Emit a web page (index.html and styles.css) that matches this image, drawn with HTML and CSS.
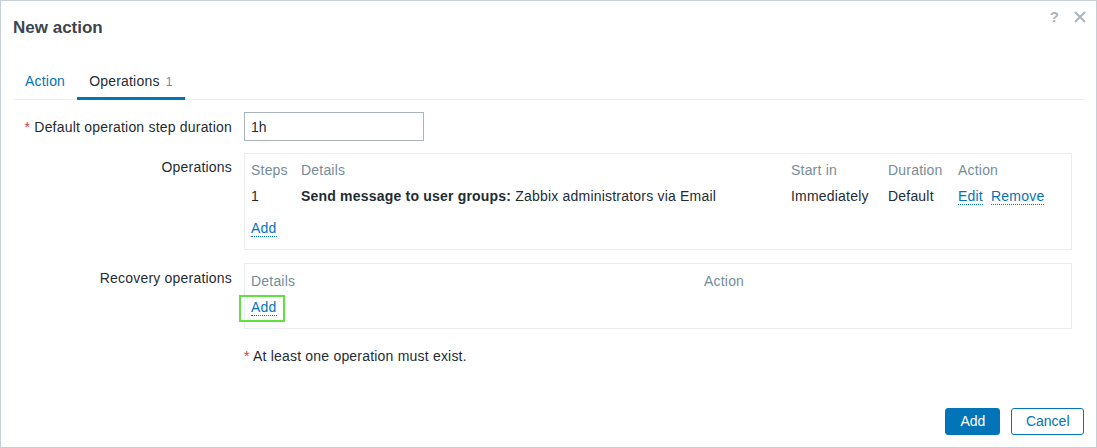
FILE: index.html
```html
<!DOCTYPE html>
<html lang="en">
<head>
<meta charset="utf-8">
<title>New action</title>
<link rel="stylesheet" href="styles.css">
</head>
<body>
<div class="modal">
  <div class="modal-head">
    <h4 class="title">New action</h4>
    <div class="head-controls">
      <span class="help">?</span>
      <svg class="close" width="12" height="12" viewBox="0 0 12 12" aria-hidden="true">
        <path d="M1 1 L11 11 M11 1 L1 11" stroke="#aab5bc" stroke-width="2" fill="none"/>
      </svg>
    </div>
  </div>

  <div class="modal-body">
    <ul class="tabs">
      <li class="tab"><a class="tab-link">Action</a></li>
      <li class="tab active"><a class="tab-link">Operations <span class="count">1</span></a></li>
    </ul>

    <div class="form">
      <div class="form-label"><span class="req">*</span> Default operation step duration</div>
      <div class="form-field"><input class="text-input" type="text" value="1h"></div>

      <div class="form-label label-box">Operations</div>
      <div class="form-field">
        <div class="op-box">
          <table class="op-table ops">
            <colgroup>
              <col class="c-steps"><col class="c-details"><col class="c-start"><col class="c-duration"><col class="c-action">
            </colgroup>
            <thead>
              <tr><th>Steps</th><th>Details</th><th>Start in</th><th>Duration</th><th>Action</th></tr>
            </thead>
            <tbody>
              <tr class="data-row">
                <td>1</td>
                <td><b>Send message to user groups:</b> Zabbix administrators via Email</td>
                <td>Immediately</td>
                <td>Default</td>
                <td><a class="link">Edit</a> <a class="link link-gap">Remove</a></td>
              </tr>
              <tr class="add-row">
                <td colspan="5"><a class="link">Add</a></td>
              </tr>
            </tbody>
          </table>
        </div>
      </div>

      <div class="form-label row-rec">Recovery operations</div>
      <div class="form-field row-rec">
        <div class="op-box">
          <table class="op-table rec">
            <colgroup>
              <col class="c-rdetails"><col class="c-raction">
            </colgroup>
            <thead>
              <tr><th>Details</th><th>Action</th></tr>
            </thead>
            <tbody>
              <tr class="add-row add-row-rec">
                <td colspan="2"><a class="link highlighted">Add</a></td>
              </tr>
            </tbody>
          </table>
        </div>
      </div>

      <div class="form-field note-field"><span class="req">*</span> At least one operation must exist.</div>
    </div>
  </div>

  <div class="modal-foot">
    <button class="btn btn-primary" type="button">Add</button>
    <button class="btn btn-alt" type="button">Cancel</button>
  </div>
</div>
</body>
</html>
```

FILE: styles.css
```css
html, body {
  margin: 0;
  padding: 0;
  background: #ffffff;
}

body {
  font-family: "Liberation Sans", Arial, sans-serif;
  font-size: 14px;
  line-height: 18px;
  color: #1f2c33;
}

.modal {
  box-sizing: border-box;
  width: 1097px;
  height: 448px;
  border: 1px solid #c6cfd5;
  background: #ffffff;
  display: flex;
  flex-direction: column;
}

/* header */
.modal-head {
  display: flex;
  justify-content: space-between;
  align-items: flex-start;
  padding: 8px 10px 0 12px;
}

.title {
  margin: 9px 0 0;
  font-size: 17px;
  line-height: 20px;
  font-weight: bold;
  color: #3b4651;
}

.head-controls {
  display: flex;
  align-items: center;
  gap: 15px;
  height: 16px;
}

.help {
  font-size: 15px;
  line-height: 16px;
  font-weight: bold;
  color: #aab5bc;
}

.close {
  display: block;
}

/* body */
.modal-body {
  flex: 1;
}

.tabs {
  list-style: none;
  margin: 25px 12px 0;
  padding: 0;
  display: flex;
  border-bottom: 1px solid #ebeef0;
  letter-spacing: 0.2px;
}

.tab {
  position: relative;
}

.tab-link {
  display: block;
  padding: 9px 12px 8px;
  line-height: 18px;
  color: #0275b8;
  cursor: pointer;
}

.tab.active .tab-link {
  color: #1f2c33;
}

.tab.active::after {
  content: "";
  position: absolute;
  left: 0;
  right: 0;
  bottom: -1px;
  height: 3px;
  background: #0275b8;
}

.count {
  font-size: 12px;
  color: #768d99;
  margin-left: 2px;
}

/* form */
.form {
  display: grid;
  grid-template-columns: 231px 828px;
  column-gap: 12px;
  row-gap: 12px;
  padding-top: 12px;
  letter-spacing: 0.2px;
}

.form-label {
  text-align: right;
  padding-top: 6px;
  line-height: 18px;
}

.label-box {
  padding-top: 5px;
}

.row-rec {
  margin-top: 1px;
}

.req {
  color: #e33734;
}

.text-input {
  box-sizing: border-box;
  display: block;
  width: 180px;
  height: 29px;
  margin: 0;
  padding: 0 6px;
  border: 1px solid #aab5bb;
  border-radius: 0;
  font-family: "Liberation Sans", Arial, sans-serif;
  font-size: 14px;
  color: #1f2c33;
  background: #ffffff;
  outline: none;
}

.op-box {
  border: 1px solid #ebeef0;
  padding: 0 6px;
}

.op-table {
  width: 100%;
  table-layout: fixed;
  border-collapse: collapse;
}

.c-steps { width: 50px; }
.c-details { width: 490px; }
.c-start { width: 97px; }
.c-duration { width: 70px; }
.c-action { width: auto; }
.c-rdetails { width: 453px; }
.c-raction { width: auto; }

.op-table th {
  text-align: left;
  font-weight: normal;
  color: #768d99;
  padding: 8px 0 3px;
  line-height: 18px;
}

.op-table.ops th {
  padding-top: 7px;
}

.op-table td {
  padding: 5px 0 3px;
  vertical-align: top;
  line-height: 18px;
  white-space: nowrap;
}

.op-table .add-row td {
  padding: 11px 0 12px;
}

.op-table .add-row-rec td {
  padding: 5px 0 12px;
}

.link {
  color: #0275b8;
  text-decoration: none;
  border-bottom: 1px dotted #0275b8;
  cursor: pointer;
}

.link-gap {
  margin-left: 4px;
}

.highlighted {
  position: relative;
}

.highlighted::before {
  content: "";
  position: absolute;
  left: -12px;
  right: -8px;
  top: -4px;
  bottom: -7px;
  border: 2px solid #5fe23f;
}

.note-field {
  grid-column: 2;
  padding-top: 6px;
}

/* footer */
.modal-foot {
  display: flex;
  justify-content: flex-end;
  gap: 11px;
  padding: 0 12px 12px;
}

.btn {
  box-sizing: border-box;
  height: 27px;
  padding: 0 13.5px;
  border-radius: 3px;
  font-family: "Liberation Sans", Arial, sans-serif;
  font-size: 14px;
  line-height: 25px;
  cursor: pointer;
}

.btn-primary {
  background: #0275b8;
  border: 1px solid #0275b8;
  color: #ffffff;
  padding: 0 14px;
}

.btn-alt {
  background: #ffffff;
  border: 1px solid #0275b8;
  color: #0275b8;
}
```
